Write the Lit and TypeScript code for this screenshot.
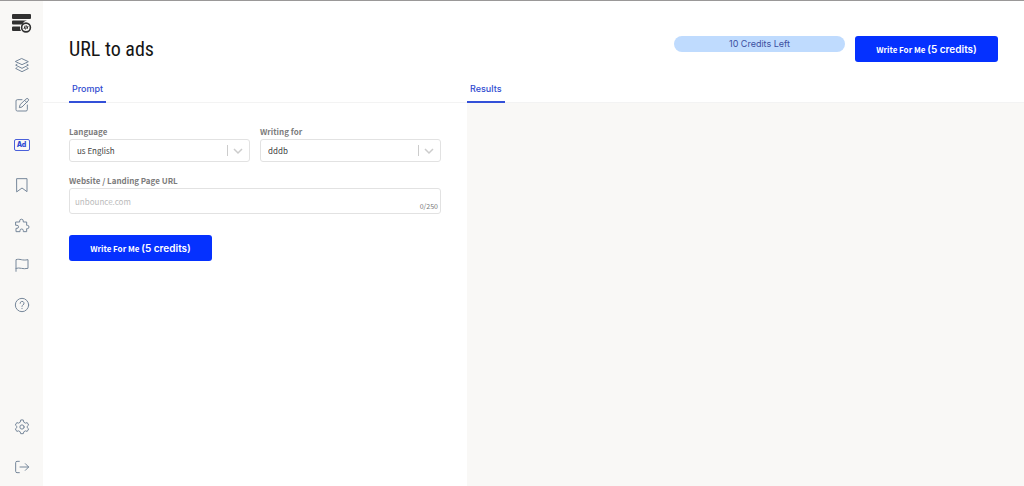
import { LitElement, html, css, svg, TemplateResult } from "lit";
import { customElement, property, state } from "lit/decorators.js";

const icons: Record<string, TemplateResult> = {
  layers: svg`<path d="M12 2.500 21.500 7 12 11.500 2.500 7z"/><path d="M4.500 11l-2 1.200L12 17l9.500-4.800-2-1.200"/><path d="M4.500 16l-2 1.200L12 22l9.500-4.800-2-1.200"/>`,
  edit: svg`<path d="M12 4H5a2 2 0 0 0-2 2v13a2 2 0 0 0 2 2h13a2 2 0 0 0 2-2v-7"/><path d="M18.200 2.800a2.100 2.100 0 0 1 3 3L12 15l-4 1 1-4z"/><path d="m16 5 3 3"/>`,
  bookmark: svg`<path d="M4.500 2.500h15v19.500L12 16.500 4.500 22z"/>`,
  puzzle: svg`<path d="M3 7.500h5.500V6a2.700 2.700 0 1 1 5.400 0v1.500H19v5h1a2.500 2.500 0 1 1 0 5h-1V22h-5v-1.500a2.500 2.500 0 0 0-5 0V22H3v-5h1.500a2.300 2.300 0 0 0 0-4.600H3z"/>`,
  flag: svg`<path d="M3 21.500V4c6-2 9 2 18 0v13c-8 2-12-2-18 0"/>`,
  help: svg`<circle cx="12" cy="12" r="10"/><path d="M9.200 9.500a2.900 2.900 0 1 1 4.300 2.500c-1 .6-1.500 1-1.500 2.200"/><path d="M12 17v.500"/>`,
  settings: svg`<path d="m10 2-.7 2.800L7 6.200l-2.800-.8-2.200 3.700L4.200 11v2L2 14.900l2.200 3.700 2.800-.8 2.300 1.400L10 22h4l.7-2.800 2.300-1.400 2.800.8 2.200-3.700-2.200-1.900v-2L22 9.100l-2.200-3.700-2.800.8-2.300-1.400L14 2z"/><circle cx="12" cy="12" r="3.200"/>`,
  logout: svg`<path d="M8 3.500H4.500a2 2 0 0 0-2 2v13a2 2 0 0 0 2 2H8"/><path d="M9 12h13"/><path d="m17 7 5 5-5 5"/>`,
};

@customElement("side-nav")
class SideNav extends LitElement {
  static styles = css`
    :host { display: flex; flex-direction: column; align-items: center; background: #f9f8f6; padding: 10px 0; }
    .nav { display: flex; flex-direction: column; gap: 24px; margin-top: 22px; }
    .bottom { margin-top: auto; padding-bottom: 1px; }
    a { display: flex; align-items: center; justify-content: center; width: 16px; height: 16px; color: #76879a; text-decoration: none; }
    .icon { width: 16px; height: 16px; fill: none; stroke: currentColor; stroke-width: 1.500; stroke-linecap: round; stroke-linejoin: round; }
    .logo { width: 20px; height: 24px; flex: none; }
    .ad { box-sizing: border-box; width: 16px; height: 12px; flex: none; border: 1px solid #4a60da; border-radius: 2px; color: #2d49d4; font: 800 7px/10px Inter, sans-serif; text-align: center; }
  `;

  link(name: string, label: string) {
    return html`<a href="#${name}" aria-label=${label}><svg class="icon" viewBox="0 0 24 24">${icons[name]}</svg></a>`;
  }

  render() {
    return html`
      <svg class="logo" viewBox="0 0 20 24" role="img" aria-label="Home">
        <g fill="#303030">
          <rect x="0" y="3" width="19" height="5" rx="1"/>
          <path d="M1 9.500h14a6 6 0 0 0-4.500 4H1a1 1 0 0 1-1-1v-2a1 1 0 0 1 1-1z"/>
          <path d="M1 15.500h7a6 6 0 0 0 1 4.500H1a1 1 0 0 1-1-1v-2.500a1 1 0 0 1 1-1z"/>
        </g>
        <circle cx="14" cy="16.500" r="4.400" fill="#f9f8f6" stroke="#303030" stroke-width="1.600"/>
        <path d="m13.200 14.500-1.200 3.500m2.500-3.500-1 4m2.500-3.500-1 3" fill="none" stroke="#303030" stroke-width="1"/>
      </svg>
      <nav class="nav">
        ${this.link("layers", "Projects")} ${this.link("edit", "Editor")}
        <a href="#ads" aria-current="page"><span class="ad">Ad</span></a>
        ${this.link("bookmark", "Saved")} ${this.link("puzzle", "Extensions")}
        ${this.link("flag", "Feedback")} ${this.link("help", "Help")}
      </nav>
      <nav class="nav bottom">${this.link("settings", "Settings")} ${this.link("logout", "Log out")}</nav>
    `;
  }
}

@customElement("write-button")
class WriteButton extends LitElement {
  @property({ type: Number }) cost = 5;
  static styles = css`
    :host { display: block; }
    button { display: block; width: 143px; height: 26px; padding: 0; border: 0; border-radius: 3px; background: #0531ff; color: #fff; font: 700 8px/24px "Noto Sans CJK SC", sans-serif; cursor: pointer; }
    .cost { font: 600 10px/24px Inter, sans-serif; }
  `;
  render() {
    return html`<button type="button">Write For Me <span class="cost">(${this.cost} credits)</span></button>`;
  }
}

@customElement("app-root")
class AppRoot extends LitElement {
  @state() private url = "";

  static styles = css`
    :host { display: grid; grid-template-columns: 43px minmax(0, 1fr); box-sizing: border-box; min-height: 100vh; border-top: 1px solid #9a9898; background: #fff; font-family: "Noto Sans CJK SC", sans-serif; }
    .page { display: flex; flex-direction: column; }
    .header { display: flex; align-items: flex-start; gap: 10px; padding: 35px 26px 0; }
    h1 { flex: 1; margin: 0; color: #151515; font: 400 20px/26px "Roboto Condensed", "Liberation Sans Narrow", sans-serif; }
    .credits { width: 171px; height: 16px; border-radius: 8px; background: #bfdbfe; color: #3d50a0; font: 400 9px/16px Inter, sans-serif; text-align: center; }
    .columns { flex: 1; display: grid; grid-template-columns: 424fr 557fr; margin-top: 14px; }
    .column { display: flex; flex-direction: column; }
    .tabs { display: flex; border-bottom: 1px solid #f3f3f3; }
    .tabs.inset { padding-left: 26px; }
    .tab { height: 27px; margin-bottom: -1px; padding: 0 3px; border: 0; border-bottom: 2px solid #3350d8; background: none; color: #2f4bd0; font: 500 9px/20px Inter, sans-serif; display: flex; align-items: center; box-sizing: border-box; }
    .results { flex: 1; background: #f9f8f6; }
    .form { display: grid; grid-template-columns: 1fr 1fr; gap: 13px 10px; padding: 23px 26px; }
    .field { display: flex; flex-direction: column; }
    .wide { grid-column: 1 / -1; }
    label { margin-bottom: 1px; color: #7c7c7c; font-size: 8px; line-height: 12px; font-weight: 700; }
    .control { display: grid; align-items: center; }
    .control > * { grid-area: 1 / 1; }
    select, input { box-sizing: border-box; width: 100%; min-width: 0; margin: 0; border: 1px solid #e2e2e2; border-radius: 3px; background: #fff; color: #444; font: 400 8px/16px "Noto Sans CJK SC", sans-serif; }
    select { height: 23px; padding: 0 32px 0 7px; appearance: none; }
    input { height: 26px; padding: 0 36px 0 5px; }
    input::placeholder { color: #bbb; opacity: 1; }
    .arrow { justify-self: end; width: 24px; height: 15px; pointer-events: none; fill: none; stroke: #ccc; }
    .count { align-self: end; justify-self: end; padding: 0 3px 2px 0; color: #777; font-size: 7px; line-height: 12px; }
    .submit { margin-top: 8px; }
  `;

  select(id: string, label: string, value: string) {
    return html`
      <div class="field">
        <label for=${id}>${label}</label>
        <div class="control">
          <select id=${id}><option>${value}</option></select>
          <svg class="arrow" viewBox="0 0 24 15" aria-hidden="true"><path d="M1.500 2v11"/><path d="m8 6 4 4 4-4" stroke-width="1.500"/></svg>
        </div>
      </div>`;
  }

  render() {
    return html`
      <side-nav></side-nav>
      <main class="page">
        <header class="header">
          <h1>URL to ads</h1>
          <div class="credits">10 Credits Left</div>
          <write-button></write-button>
        </header>
        <div class="columns">
          <section class="column">
            <div class="tabs inset"><button class="tab" type="button">Prompt</button></div>
            <form class="form">
              ${this.select("language", "Language", "us English")}
              ${this.select("writing-for", "Writing for", "dddb")}
              <div class="field wide">
                <label for="url">Website / Landing Page URL</label>
                <div class="control">
                  <input id="url" maxlength="250" placeholder="unbounce.com" .value=${this.url}
                    @input=${(e: Event) => (this.url = (e.target as HTMLInputElement).value)} />
                  <span class="count">${this.url.length}/250</span>
                </div>
              </div>
              <write-button class="wide submit"></write-button>
            </form>
          </section>
          <section class="column">
            <div class="tabs"><button class="tab" type="button">Results</button></div>
            <div class="results"></div>
          </section>
        </div>
      </main>
    `;
  }
}
